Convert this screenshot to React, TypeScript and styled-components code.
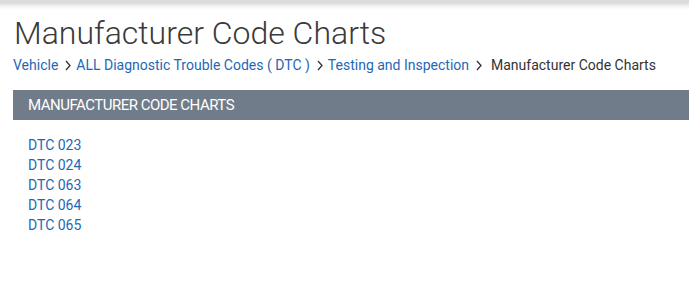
import React from "react";
import styled, { createGlobalStyle } from "styled-components";

const Global = createGlobalStyle`
  html, body { margin: 0; padding: 0; background: #fff; }
  body { font-family: Roboto, "Liberation Sans", Arial, sans-serif; }
`;

const Page = styled.div`
  position: relative;
  width: 689px;
  height: 294px;
  overflow: hidden;
  background: #fff;
`;

const TopShadow = styled.div`
  height: 10px;
  background: linear-gradient(#dcdcdc 0, #dcdcdc 3px, #f2f2f2 6px, #ffffff 10px);
`;

const Content = styled.div`
  padding: 0 0 0 13px;
`;

const Title = styled.h1`
  margin: 3px 0 0 1px;
  font-weight: 300;
  font-size: 32px;
  line-height: 40px;
  color: #3a3a3a;
`;

const Crumbs = styled.nav`
  display: flex;
  align-items: center;
  height: 24px;
  font-size: 14px;
  color: #333;
`;

const CrumbLink = styled.a`
  color: #1e68b5;
  text-decoration: none;
`;

const Sep = styled.span<{ $last?: boolean }>`
  display: inline-flex;
  align-items: center;
  margin: 0 ${(p) => (p.$last ? 9 : 5)}px 0 7px;
`;

const Current = styled.span`
  color: #333;
`;

const Bar = styled.div`
  margin-top: 13px;
  height: 30px;
  background: #717c8a;
  color: #fff;
  display: flex;
  align-items: center;
  padding-left: 15px;
  font-size: 15px;
  letter-spacing: -0.5px;
  text-transform: uppercase;
`;

const List = styled.ul`
  list-style: none;
  margin: 15px 0 0;
  padding: 0 0 0 15px;
`;

const Item = styled.li`
  font-size: 14px;
  line-height: 20px;
`;

const Chevron = () => (
  <svg width="6" height="11" viewBox="0 0 6 11">
    <path d="M1 1 L5 5.5 L1 10" fill="none" stroke="#333" strokeWidth="1.3" />
  </svg>
);

export default function App() {
  const codes = ["DTC 023", "DTC 024", "DTC 063", "DTC 064", "DTC 065"];
  return (
    <Page>
      <Global />
      <TopShadow />
      <Content>
        <Title>Manufacturer Code Charts</Title>
        <Crumbs>
          <CrumbLink href="#">Vehicle</CrumbLink>
          <Sep><Chevron /></Sep>
          <CrumbLink href="#">ALL Diagnostic Trouble Codes ( DTC )</CrumbLink>
          <Sep><Chevron /></Sep>
          <CrumbLink href="#">Testing and Inspection</CrumbLink>
          <Sep $last><Chevron /></Sep>
          <Current>Manufacturer Code Charts</Current>
        </Crumbs>
        <Bar>Manufacturer Code Charts</Bar>
        <List>
          {codes.map((c) => (
            <Item key={c}><CrumbLink href="#">{c}</CrumbLink></Item>
          ))}
        </List>
      </Content>
    </Page>
  );
}
